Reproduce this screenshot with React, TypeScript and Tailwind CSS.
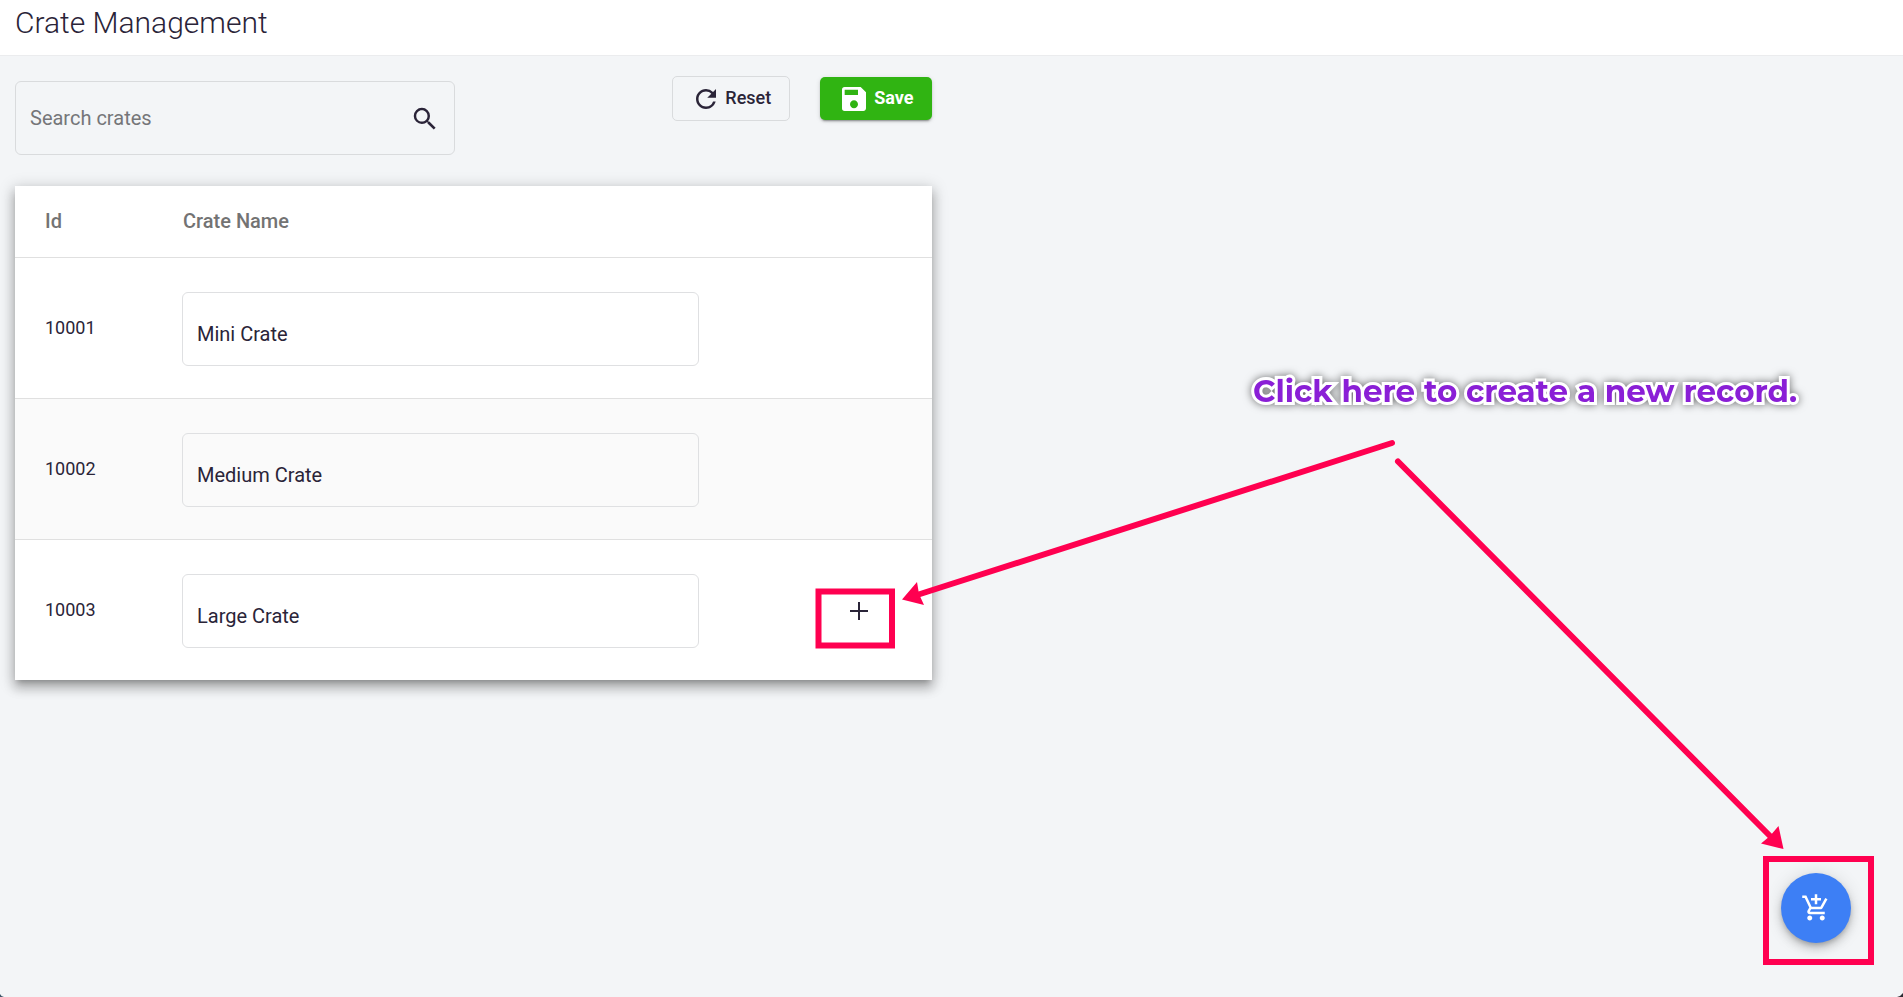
import { useState } from "react";
import { MdAddShoppingCart, MdRefresh, MdSave, MdSearch } from "react-icons/md";

interface Crate {
  id: number;
  name: string;
}

const initialCrates: Crate[] = [
  { id: 10001, name: "Mini Crate" },
  { id: 10002, name: "Medium Crate" },
  { id: 10003, name: "Large Crate" },
];

function PlusIcon() {
  return (
    <svg viewBox="0 0 30 30" className="size-[30px]" fill="currentColor" aria-hidden="true">
      <path d="M14 6h2v8h8v2h-8v8h-2v-8H6v-2h8z" />
    </svg>
  );
}

function Annotations() {
  return (
    <div className="pointer-events-none absolute inset-0 overflow-hidden">
      <p className="absolute top-[371px] left-[1253px] whitespace-nowrap font-[Montserrat,Inter,sans-serif] text-[31px] leading-[40px] font-bold text-[#8a1fd6] [paint-order:stroke_fill] [-webkit-text-stroke:6px_white] [filter:drop-shadow(0_0_4px_rgba(0,0,0,0.55))]">
        Click here to create a new record.
      </p>
      <svg className="absolute top-0 left-0" width="1903" height="997" aria-hidden="true">
        <g stroke="#ff0050" strokeWidth="6" strokeLinecap="round">
          <line x1="1392" y1="443" x2="917" y2="595" />
          <line x1="1398" y1="461.500" x2="1772" y2="838" />
        </g>
        <g fill="#ff0050">
          <path d="M902 599.500L917 582L919 594L924 605Z" />
          <path d="M1783.500 849L1778.500 826L1770 836L1761 843.500Z" />
        </g>
        <rect x="818.500" y="591.500" width="73.500" height="54" fill="none" stroke="#ff0050" strokeWidth="6" />
        <path d="M1897 997Q1901 996 1903 993V997Z" fill="#2b2b33" />
        <path d="M0 994Q1 996.500 4 997H0Z" fill="#3b5468" />
      </svg>
      <div className="absolute right-[29px] bottom-8 h-[109px] w-[111px] border-6 border-[#ff0050]" />
    </div>
  );
}

export default function App() {
  const [crates, setCrates] = useState(initialCrates);
  const [query, setQuery] = useState("");

  const visible = crates.filter((c) => c.name.toLowerCase().includes(query.toLowerCase()));

  const rename = (id: number, name: string) =>
    setCrates((prev) => prev.map((c) => (c.id === id ? { ...c, name } : c)));

  const addCrate = () =>
    setCrates((prev) => [...prev, { id: 10001 + prev.length, name: "" }]);

  const reset = () => {
    setCrates(initialCrates);
    setQuery("");
  };

  return (
    <div className="relative min-h-screen bg-[#f3f5f7] font-[Roboto,sans-serif] text-[#2a2438]">
      <header className="h-14 border-b border-[#ebecee] bg-white px-[15px]">
        <h1 className="text-[30px] leading-[46px] font-light">Crate Management</h1>
      </header>

      <main className="w-1/2 pt-5 pr-5 pl-[15px]">
        {/* Toolbar */}
        <div className="mb-[31px] flex items-start justify-between">
          <label className="mt-[5px] flex h-[74px] w-[48%] items-center rounded-md border border-[#d9dbdd] px-[14px]">
            <input
              type="text"
              aria-label="Search crates"
              placeholder="Search crates"
              value={query}
              onChange={(e) => setQuery(e.target.value)}
              className="min-w-0 flex-1 bg-transparent text-[20px] outline-none placeholder:text-[#757679]"
            />
            <MdSearch className="box-content size-[30px] pt-0.5" />
          </label>
          <div className="flex items-center gap-[30px]">
            <button
              type="button"
              onClick={reset}
              className="flex h-[45px] items-center gap-1 rounded-[5px] border border-[#d9dbdd] px-[18px] text-[18px] font-medium"
            >
              <MdRefresh className="size-[30px]" />
              <span className="pb-0.5">Reset</span>
            </button>
            <button
              type="button"
              className="flex h-[43px] items-center gap-1 rounded-[5px] bg-[#30b412] px-[18px] text-[18px] font-bold text-white shadow-[0_3px_1px_-2px_rgba(0,0,0,0.2),0_2px_2px_0_rgba(0,0,0,0.14),0_1px_5px_0_rgba(0,0,0,0.12)]"
            >
              <MdSave className="size-8" />
              <span className="pb-0.5">Save</span>
            </button>
          </div>
        </div>

        {/* Crates */}
        <table className="w-full table-fixed border-collapse bg-white text-left shadow-[0_5px_5px_-3px_rgba(0,0,0,0.2),0_8px_10px_1px_rgba(0,0,0,0.18),0_3px_14px_2px_rgba(0,0,0,0.18)]">
          <thead>
            <tr className="h-[71px] border-b border-[#e0e0e0] text-[20px] text-[#737373]">
              <th className="w-[167px] pl-[30px] font-medium">Id</th>
              <th className="w-[57%] pl-px font-medium">Crate Name</th>
              <th aria-label="Actions" />
            </tr>
          </thead>
          <tbody>
            {visible.map((crate, idx) => (
              <tr
                key={crate.id}
                className="h-[141px] border-b border-[#e0e0e0] last:border-b-0 even:bg-[#fafafa]"
              >
                <td className="pb-px pl-[30px] text-[18px]">{crate.id}</td>
                <td className="pt-0.5 pr-[5px]">
                  <input
                    type="text"
                    aria-label={`Name of crate ${crate.id}`}
                    value={crate.name}
                    onChange={(e) => rename(crate.id, e.target.value)}
                    className="block h-[74px] w-full rounded-md border border-[#dfe0e2] bg-transparent px-[14px] pt-[11px] text-[20px] outline-none"
                  />
                </td>
                <td className="pt-0.5 pr-[58px] text-right">
                  {idx === visible.length - 1 && (
                    <button type="button" aria-label="Add crate" onClick={addCrate} className="align-middle">
                      <PlusIcon />
                    </button>
                  )}
                </td>
              </tr>
            ))}
          </tbody>
        </table>
      </main>

      <button
        type="button"
        aria-label="New crate"
        onClick={addCrate}
        className="absolute right-[52px] bottom-[54px] flex size-[70px] items-center justify-center rounded-full bg-[#3d7ff5] text-white shadow-[0_3px_5px_-1px_rgba(0,0,0,0.2),0_6px_10px_0_rgba(0,0,0,0.14),0_1px_18px_0_rgba(0,0,0,0.12)]"
      >
        <MdAddShoppingCart className="size-[30px]" />
      </button>

      <Annotations />
    </div>
  );
}
